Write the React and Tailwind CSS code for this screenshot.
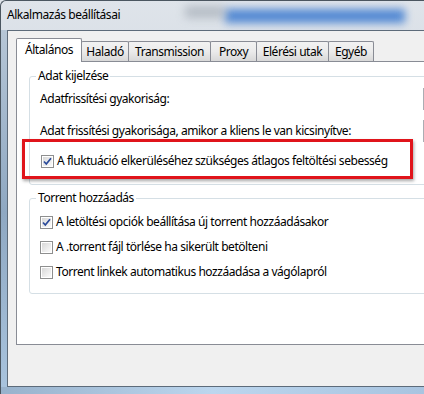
function CheckBox({ checked }) {
  return (
    <span className="w-[13px] h-[13px] border border-[#8e8f8f] bg-white p-px flex-shrink-0">
      <span className="w-full h-full flex items-center justify-center bg-gradient-to-br from-[#d8d8d8] to-[#fbfbfb]">
        {checked && (
          <svg width="9" height="9" viewBox="0 0 9 9">
            <path d="M1 4.5 L3.3 7 L8 1.2" fill="none" stroke="#2a4a9a" strokeWidth="1.7" />
          </svg>
        )}
      </span>
    </span>
  );
}

function Tab({ label, w, active }) {
  if (active) {
    return (
      <div className={`${w} h-[24px] -mb-px bg-white border border-b-0 border-[#898c95] rounded-t-[2px] flex items-center justify-center z-10 pb-[2px]`}>
        {label}
      </div>
    );
  }
  return (
    <div className={`${w} h-[20px] -ml-px bg-gradient-to-b from-[#f2f2f2] via-[#ebebeb] to-[#d8d8d8] border border-b-0 border-[#898c95] rounded-t-[2px] flex items-center justify-center`}>
      {label}
    </div>
  );
}

function Group({ title, children, className }) {
  return (
    <div className={`relative ml-[12px] -mr-[20px] border border-[#d5dfe5] rounded-[3px] ${className}`}>
      <span className="absolute -top-[9px] left-[6px] bg-white px-[2px] leading-[16px]">{title}</span>
      {children}
    </div>
  );
}

export default function App() {
  return (
    <div
      className="relative w-[424px] h-[394px] overflow-hidden flex flex-col bg-gradient-to-b from-[#dfe4ea] via-[#c9d3de] to-[#b9c9da] text-[12px] tracking-[-0.45px] text-black"
      style={{ fontFamily: '"Noto Sans", "Open Sans", sans-serif' }}
    >
      {/* glass frame and blurred window behind the title bar */}
      <div className="absolute left-0 top-[30px] w-[7px] h-[364px] bg-gradient-to-b from-[#b6c6d6] via-[#8fa8c2] to-[#a9c4de]" />
      <div className="absolute left-0 bottom-0 w-[424px] h-[7px] bg-gradient-to-r from-[#98b2cc] via-[#bcd6ee] to-[#a8c4e0]" />
      <div className="absolute left-[225px] top-[9px] w-[180px] h-[14px] bg-[#3b7ad0] blur-[4px] opacity-85" />
      <div className="absolute left-[185px] top-[6px] w-[40px] h-[12px] bg-[#9aa3ad] blur-[5px] opacity-60" />
      <div className="absolute inset-0 rounded-tl-[6px] border-l border-t border-[#4b5660] pointer-events-none" />

      <div className="relative h-[30px] pl-[7px] flex items-center">Alkalmazás beállításai</div>

      <div className="relative flex-1 ml-[7px] mb-[7px] bg-[#f0f0f0] border-l border-t border-b border-[#5d6b7a] pt-[6px] pl-[8px] flex flex-col">
        <div className="flex items-end h-[24px]">
          <Tab label="Általános" w="w-[66px]" active />
          <Tab label="Haladó" w="w-[48px]" />
          <Tab label="Transmission" w="w-[83px]" />
          <Tab label="Proxy" w="w-[47px]" />
          <Tab label="Elérési utak" w="w-[73px]" />
          <Tab label="Egyéb" w="w-[46px]" />
        </div>
        <div className="h-[284px] -mr-[4px] bg-white border border-r-0 border-[#898c95] pt-[14px]">
          <Group title="Adat kijelzése" className="h-[109px] pt-[11px]">
            <div className="flex items-center justify-between h-[22px] pl-[10px]">
              <span>Adatfrissítési gyakoriság:</span>
              <span className="w-[40px] h-[22px] -mr-[16px] border border-[#abadb3] bg-white" />
            </div>
            <div className="flex items-center justify-between h-[22px] pl-[10px] mt-[10px]">
              <span>Adat frissítési gyakorisága, amikor a kliens le van kicsinyítve:</span>
              <span className="w-[40px] h-[22px] -mr-[16px] border border-[#abadb3] bg-white" />
            </div>
            <div className="flex items-center gap-[3px] h-[22px] pl-[11px] mt-[8px]">
              <CheckBox checked />
              <span>A fluktuáció elkerüléséhez szükséges átlagos feltöltési sebesség</span>
            </div>
          </Group>
          <Group title="Torrent hozzáadás" className="h-[96px] mt-[13px] pt-[12px]">
            <div className="flex items-center gap-[3px] h-[22px] pl-[10px]">
              <CheckBox checked />
              <span>A letöltési opciók beállítása új torrent hozzáadásakor</span>
            </div>
            <div className="flex items-center gap-[3px] h-[22px] pl-[10px] mt-[3px]">
              <CheckBox />
              <span>A .torrent fájl törlése ha sikerült betölteni</span>
            </div>
            <div className="flex items-center gap-[3px] h-[22px] pl-[10px] mt-[3px]">
              <CheckBox />
              <span>Torrent linkek automatikus hozzáadása a vágólapról</span>
            </div>
          </Group>
        </div>
      </div>

      {/* red annotation frame */}
      <div className="absolute left-[22px] top-[139px] w-[391px] h-[40px] border-[3px] border-[#e0141b] shadow-[1px_2px_3px_rgba(0,0,0,0.35)]" />
    </div>
  );
}
